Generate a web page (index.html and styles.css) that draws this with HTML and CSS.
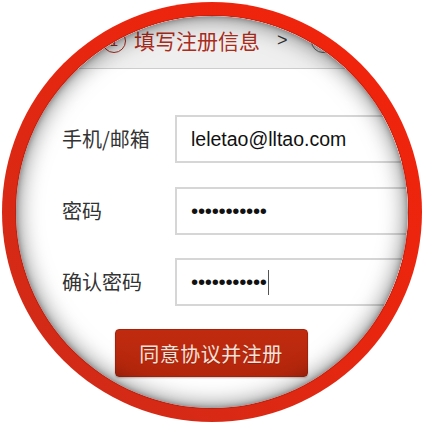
FILE: index.html
```html
<!DOCTYPE html>
<html lang="zh-CN">
<head>
<meta charset="utf-8">
<title>注册</title>
<link rel="stylesheet" href="styles.css">
</head>
<body>
<div class="ring">
  <div class="lens">
    <div class="steps">
      <span class="num active">1</span>
      <span class="step-text">填写注册信息</span>
      <span class="arrow">&gt;</span>
      <span class="num">2</span>
    </div>
    <div class="form">
      <div class="label">手机/邮箱</div>
      <div class="field">leletao@lltao.com</div>
      <div class="label">密码</div>
      <div class="field dots">•••••••••••</div>
      <div class="label">确认密码</div>
      <div class="field dots">•••••••••••<span class="caret"></span></div>
    </div>
    <button class="submit">同意协议并注册</button>
  </div>
</div>
</body>
</html>
```
FILE: styles.css
```css
html, body {
  margin: 0;
  padding: 0;
  background: #ffffff;
}

body {
  font-family: "Liberation Sans", "Noto Sans CJK SC", sans-serif;
}

.ring {
  width: 420px;
  height: 420px;
  margin: 2px 0 0 2px;
  box-sizing: border-box;
  padding: 14px;
  border-radius: 50%;
  background: linear-gradient(225deg, #f4230b 0%, #e8260f 45%, #ca2c1a 100%);
}

.lens {
  position: relative;
  width: 392px;
  height: 392px;
  border-radius: 50%;
  overflow: hidden;
  background: #ffffff;
  box-shadow: 0 0 0 1px rgba(140, 20, 10, 0.35);
}

.lens::after {
  content: "";
  position: absolute;
  inset: 0;
  border-radius: 50%;
  box-shadow: inset 0 0 24px rgba(0, 0, 0, 0.55), inset 0 0 6px rgba(0, 0, 0, 0.35);
  pointer-events: none;
}

.steps {
  height: 53px;
  box-sizing: border-box;
  padding: 0 0 3px 86px;
  display: flex;
  align-items: center;
  background: #efefef;
  border-bottom: 1px solid #cdcdcd;
  font-family: "Noto Sans CJK SC", sans-serif;
}

.num {
  width: 22px;
  height: 22px;
  border-radius: 50%;
  border: 1.5px solid #666;
  color: #666;
  font-family: "Liberation Sans", sans-serif;
  font-size: 15px;
  line-height: 22px;
  text-align: center;
  flex: none;
}

.num.active {
  border-color: #a82a1c;
  color: #a82a1c;
}

.step-text {
  margin-left: 8px;
  font-size: 21px;
  color: #ac2c1c;
  line-height: 1;
}

.arrow {
  margin-left: 17px;
  margin-right: 23px;
  font-family: "Liberation Sans", sans-serif;
  font-size: 18px;
  color: #333;
}

.form {
  display: grid;
  grid-template-columns: 113px 260px;
  row-gap: 23.5px;
  align-items: center;
  padding: 46px 0 0 46px;
}

.label {
  font-family: "Noto Sans CJK SC", sans-serif;
  font-size: 20px;
  color: #333;
  line-height: 1;
}

.field {
  height: 48px;
  box-sizing: border-box;
  border: 2px solid #d6d6d6;
  background: #fff;
  padding-left: 14px;
  display: flex;
  align-items: center;
  font-family: "Liberation Sans", sans-serif;
  font-size: 19.5px;
  color: #111;
}

.dots {
  font-size: 20.5px;
  letter-spacing: -0.3px;
}

.caret {
  display: inline-block;
  width: 1.5px;
  height: 25px;
  margin-left: 1px;
  background: #555;
}

.submit {
  display: block;
  width: 193px;
  height: 48px;
  margin: 23px auto 0;
  position: relative;
  left: -1px;
  border: 1px solid #a4220a;
  border-radius: 4px;
  background: linear-gradient(#c02b0f, #b3260c);
  box-shadow: 0 1px 2px rgba(0, 0, 0, 0.25);
  color: #f6e2da;
  font-family: "Noto Sans CJK SC", sans-serif;
  font-size: 20px;
  font-weight: 400;
  letter-spacing: 0.5px;
  text-shadow: 0 1px 0 rgba(0, 0, 0, 0.2);
  padding: 0;
}
```
